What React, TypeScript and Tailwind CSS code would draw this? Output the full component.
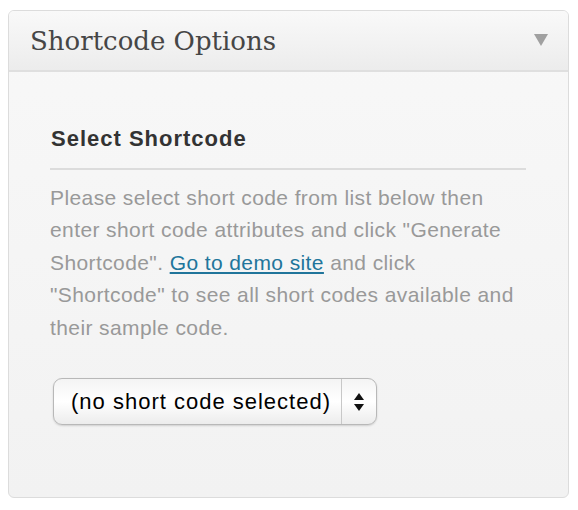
export default function App() {
  return (
    <div className="w-[578px] h-[510px] bg-white pt-[10px] pl-[8px] font-['Liberation_Sans',Arial,sans-serif]">
      <div className="w-[561px] h-[488px] rounded-[6px] border border-[#dcdcdc] bg-gradient-to-b from-[#f8f8f8] to-[#f2f2f2] flex flex-col overflow-hidden">
        <div className="h-[61px] shrink-0 flex items-center justify-between pl-[21px] pr-[20px] bg-gradient-to-b from-[#f9f9f9] to-[#ececec] border-b-2 border-[#dfdfdf]">
          <h3 className="font-['DejaVu_Serif',Georgia,serif] text-[26px] text-[#464646] leading-none">
            Shortcode Options
          </h3>
          <svg width="14" height="12" viewBox="0 0 14 12" className="mb-[2px]">
            <path d="M0 0 H14 L7 12 Z" fill="#a0a0a0" />
          </svg>
        </div>
        <div className="px-[41px] pt-[56px]">
          <h4 className="text-[22px] font-bold tracking-[1px] text-[#333] leading-none pl-px">Select Shortcode</h4>
          <div className="mt-[18px] h-[2px] w-[476px] bg-[#dcdcdc]" />
          <p className="mt-[12px] text-[21px] tracking-[0.4px] leading-[32.4px] text-[#999] w-[476px]">
            Please select short code from list below then enter short code attributes and click "Generate
            Shortcode".{" "}
            <a href="#" className="text-[#21759b] underline underline-offset-2">
              Go to demo site
            </a>{" "}
            and click "Shortcode" to see all short codes available and their sample code.
          </p>
          <div className="mt-[34px] ml-[3px] w-[324px] h-[47px] rounded-[9px] border border-[#b8b8b8] bg-gradient-to-b from-[#f4f4f4] via-[#ffffff] to-[#ececec] shadow-[0_1px_2px_rgba(0,0,0,0.15)] flex items-stretch">
            <div className="flex-1 flex items-center pl-[17px] text-[22px] tracking-[1px] text-black whitespace-nowrap">(no short code selected)</div>
            <div className="w-[35px] border-l border-[#c8c8c8] flex items-center justify-center">
              <svg width="10" height="20" viewBox="0 0 10 20">
                <path d="M5 1 L10 8 H0 Z" fill="#111" />
                <path d="M0 12 H10 L5 19 Z" fill="#111" />
              </svg>
            </div>
          </div>
        </div>
      </div>
    </div>
  );
}
